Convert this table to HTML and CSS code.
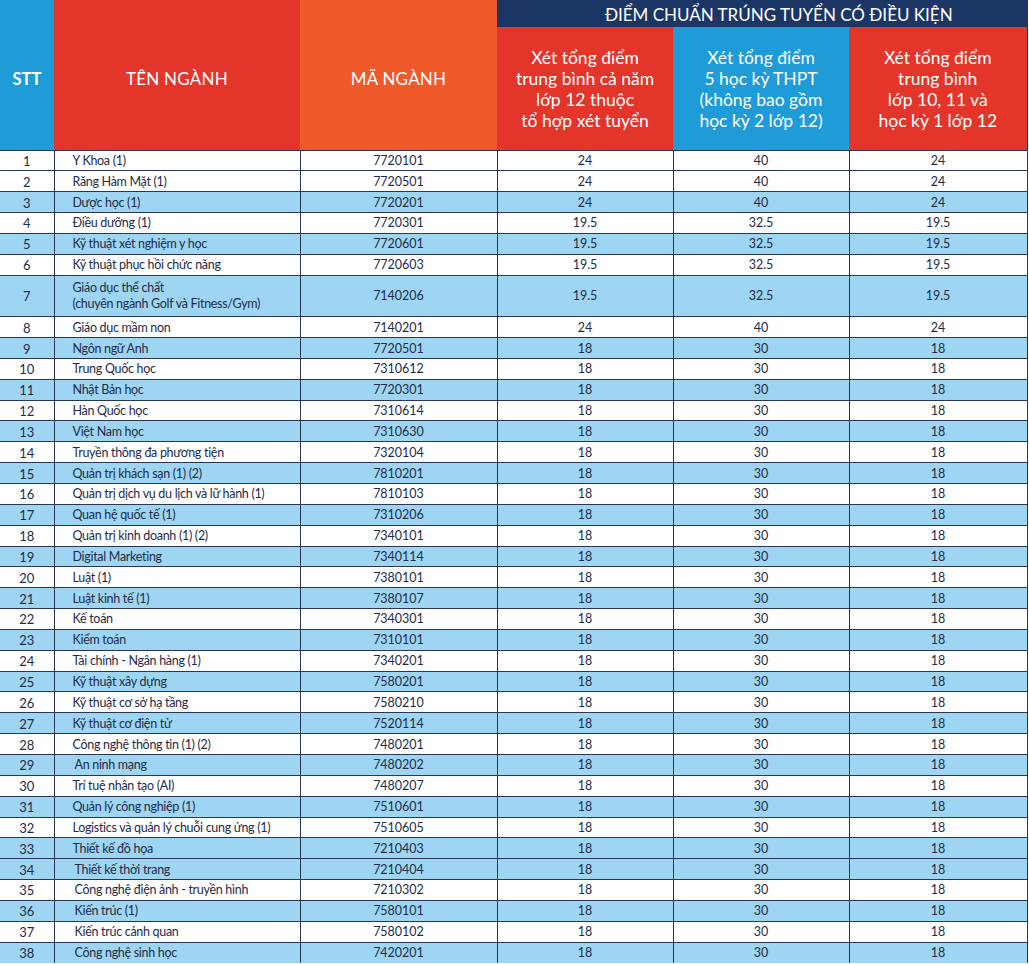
FILE: index.html
```html
<!DOCTYPE html>
<html lang="vi">
<head>
<meta charset="utf-8">
<title>Điểm chuẩn trúng tuyển có điều kiện</title>
<link rel="stylesheet" href="styles.css">
</head>
<body>
<table class="scores">
  <colgroup>
    <col class="c-stt"><col class="c-name"><col class="c-code"><col class="c-v1"><col class="c-v2"><col class="c-v3">
  </colgroup>
  <thead>
    <tr class="band-row">
      <th rowspan="2" class="h h-side h-stt">STT</th>
      <th rowspan="2" class="h h-side h-name">TÊN NGÀNH</th>
      <th rowspan="2" class="h h-side h-code">MÃ NGÀNH</th>
      <th colspan="3" class="h h-band">ĐIỂM CHUẨN TRÚNG TUYỂN CÓ ĐIỀU KIỆN</th>
    </tr>
    <tr class="sub-row">
      <th class="h h-sub red">Xét tổng điểm<br>trung bình cả năm<br>lớp 12 thuộc<br>tổ hợp xét tuyển</th>
      <th class="h h-sub blue">Xét tổng điểm<br>5 học kỳ THPT<br>(không bao gồm<br>học kỳ 2 lớp 12)</th>
      <th class="h h-sub red">Xét tổng điểm<br>trung bình<br>lớp 10, 11 và<br>học kỳ 1 lớp 12</th>
    </tr>
  </thead>
  <tbody>
    <tr><td>1</td><td class="name">Y Khoa (1)</td><td>7720101</td><td>24</td><td>40</td><td>24</td></tr>
    <tr><td>2</td><td class="name">Răng Hàm Mặt (1)</td><td>7720501</td><td>24</td><td>40</td><td>24</td></tr>
    <tr class="alt"><td>3</td><td class="name">Dược học (1)</td><td>7720201</td><td>24</td><td>40</td><td>24</td></tr>
    <tr><td>4</td><td class="name">Điều dưỡng (1)</td><td>7720301</td><td>19.5</td><td>32.5</td><td>19.5</td></tr>
    <tr class="alt"><td>5</td><td class="name">Kỹ thuật xét nghiệm y học</td><td>7720601</td><td>19.5</td><td>32.5</td><td>19.5</td></tr>
    <tr><td>6</td><td class="name">Kỹ thuật phục hồi chức năng</td><td>7720603</td><td>19.5</td><td>32.5</td><td>19.5</td></tr>
    <tr class="alt tall"><td>7</td><td class="name two">Giáo dục thể chất<br>(chuyên ngành Golf và Fitness/Gym)</td><td>7140206</td><td>19.5</td><td>32.5</td><td>19.5</td></tr>
    <tr><td>8</td><td class="name">Giáo dục mầm non</td><td>7140201</td><td>24</td><td>40</td><td>24</td></tr>
    <tr class="alt"><td>9</td><td class="name">Ngôn ngữ Anh</td><td>7720501</td><td>18</td><td>30</td><td>18</td></tr>
    <tr><td>10</td><td class="name">Trung Quốc học</td><td>7310612</td><td>18</td><td>30</td><td>18</td></tr>
    <tr class="alt"><td>11</td><td class="name">Nhật Bản học</td><td>7720301</td><td>18</td><td>30</td><td>18</td></tr>
    <tr><td>12</td><td class="name">Hàn Quốc học</td><td>7310614</td><td>18</td><td>30</td><td>18</td></tr>
    <tr class="alt"><td>13</td><td class="name">Việt Nam học</td><td>7310630</td><td>18</td><td>30</td><td>18</td></tr>
    <tr><td>14</td><td class="name">Truyền thông đa phương tiện</td><td>7320104</td><td>18</td><td>30</td><td>18</td></tr>
    <tr class="alt"><td>15</td><td class="name">Quản trị khách sạn (1) (2)</td><td>7810201</td><td>18</td><td>30</td><td>18</td></tr>
    <tr><td>16</td><td class="name">Quản trị dịch vụ du lịch và lữ hành (1)</td><td>7810103</td><td>18</td><td>30</td><td>18</td></tr>
    <tr class="alt"><td>17</td><td class="name">Quan hệ quốc tế (1)</td><td>7310206</td><td>18</td><td>30</td><td>18</td></tr>
    <tr><td>18</td><td class="name">Quản trị kinh doanh (1) (2)</td><td>7340101</td><td>18</td><td>30</td><td>18</td></tr>
    <tr class="alt"><td>19</td><td class="name">Digital Marketing</td><td>7340114</td><td>18</td><td>30</td><td>18</td></tr>
    <tr><td>20</td><td class="name">Luật (1)</td><td>7380101</td><td>18</td><td>30</td><td>18</td></tr>
    <tr class="alt"><td>21</td><td class="name">Luật kinh tế (1)</td><td>7380107</td><td>18</td><td>30</td><td>18</td></tr>
    <tr><td>22</td><td class="name">Kế toán</td><td>7340301</td><td>18</td><td>30</td><td>18</td></tr>
    <tr class="alt"><td>23</td><td class="name">Kiểm toán</td><td>7310101</td><td>18</td><td>30</td><td>18</td></tr>
    <tr><td>24</td><td class="name">Tài chính - Ngân hàng (1)</td><td>7340201</td><td>18</td><td>30</td><td>18</td></tr>
    <tr class="alt"><td>25</td><td class="name">Kỹ thuật xây dựng</td><td>7580201</td><td>18</td><td>30</td><td>18</td></tr>
    <tr><td>26</td><td class="name">Kỹ thuật cơ sở hạ tầng</td><td>7580210</td><td>18</td><td>30</td><td>18</td></tr>
    <tr class="alt"><td>27</td><td class="name">Kỹ thuật cơ điện tử</td><td>7520114</td><td>18</td><td>30</td><td>18</td></tr>
    <tr><td>28</td><td class="name">Công nghệ thông tin (1) (2)</td><td>7480201</td><td>18</td><td>30</td><td>18</td></tr>
    <tr class="alt"><td>29</td><td class="name indent">An ninh mạng</td><td>7480202</td><td>18</td><td>30</td><td>18</td></tr>
    <tr><td>30</td><td class="name">Trí tuệ nhân tạo (AI)</td><td>7480207</td><td>18</td><td>30</td><td>18</td></tr>
    <tr class="alt"><td>31</td><td class="name">Quản lý công nghiệp (1)</td><td>7510601</td><td>18</td><td>30</td><td>18</td></tr>
    <tr><td>32</td><td class="name">Logistics và quản lý chuỗi cung ứng (1)</td><td>7510605</td><td>18</td><td>30</td><td>18</td></tr>
    <tr class="alt"><td>33</td><td class="name">Thiết kế đồ họa</td><td>7210403</td><td>18</td><td>30</td><td>18</td></tr>
    <tr class="alt"><td>34</td><td class="name indent">Thiết kế thời trang</td><td>7210404</td><td>18</td><td>30</td><td>18</td></tr>
    <tr><td>35</td><td class="name indent">Công nghệ điện ảnh - truyền hình</td><td>7210302</td><td>18</td><td>30</td><td>18</td></tr>
    <tr class="alt"><td>36</td><td class="name indent">Kiến trúc (1)</td><td>7580101</td><td>18</td><td>30</td><td>18</td></tr>
    <tr><td>37</td><td class="name indent">Kiến trúc cảnh quan</td><td>7580102</td><td>18</td><td>30</td><td>18</td></tr>
    <tr class="alt"><td>38</td><td class="name indent">Công nghệ sinh học</td><td>7420201</td><td>18</td><td>30</td><td>18</td></tr>
  </tbody>
</table>
</body>
</html>
```
FILE: styles.css
```css
html, body {
  margin: 0;
  padding: 0;
  background: #ffffff;
}

body {
  font-family: Lato, "Open Sans", "Liberation Sans", sans-serif;
  color: #1f2b48;
}

.scores {
  width: 1027px;
  border-collapse: collapse;
  table-layout: fixed;
  border-right: 1px solid #2a3657;
}

.c-stt { width: 54px; }
.c-name { width: 246px; }
.c-code { width: 197px; }
.c-v1 { width: 176px; }
.c-v2 { width: 176px; }
.c-v3 { width: 178px; }

.h {
  padding: 0;
  color: #ffffff;
  text-align: center;
  vertical-align: middle;
  font-weight: 700;
  border: none;
}

.h-side {
  padding-top: 8px;
}

.band-row { height: 27px; }
.sub-row { height: 123px; }

.h-stt {
  background: #1f9bd7;
  font-size: 16.5px;
  font-weight: 700;
}

.h-name {
  background: #e3352a;
  font-size: 17px;
  font-weight: 400;
  letter-spacing: 0.2px;
}

.h-code {
  background: #f0592a;
  font-size: 17px;
  font-weight: 400;
  letter-spacing: 0.2px;
}

.h-band {
  background: #1b3665;
  font-size: 17px;
  font-weight: 400;
  padding-left: 34px;
  padding-top: 2px;
  vertical-align: middle;
}

.h-sub {
  font-size: 17.5px;
  font-weight: 400;
  line-height: 21px;
  padding-top: 1px;
}

.h-sub.red { background: #e3352a; }
.h-sub.blue { background: #1f9bd7; }

tbody tr {
  height: 20.85px;
}

tbody tr.tall {
  height: 41.7px;
}

tbody tr.alt {
  background: #9dd5f3;
}

tbody td {
  padding: 1px 0 0 0;
  font-size: 12.5px;
  line-height: 14px;
  text-align: center;
  vertical-align: middle;
  border-top: 1px solid #2a3657;
  border-left: 1px solid #2a3657;
  color: #1f2b48;
}

tbody td:first-child {
  border-left: none;
  font-size: 13px;
}

tbody td.name {
  text-align: left;
  padding-left: 18px;
  white-space: nowrap;
  letter-spacing: -0.3px;
}

tbody td.name.indent {
  padding-left: 20px;
}

tbody td.name.two {
  font-size: 12.5px;
  line-height: 16px;
}
```
